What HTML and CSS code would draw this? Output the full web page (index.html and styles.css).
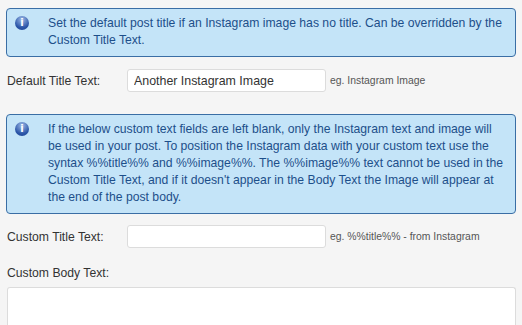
FILE: index.html
```html
<!DOCTYPE html>
<html lang="en">
<head>
    <meta charset="UTF-8">
    <title>Instagram Post Settings</title>
    <link rel="stylesheet" href="styles.css">
</head>
<body>
    <div class="notice">
        <span class="info-icon">i</span>
        <p>Set the default post title if an Instagram image has no title. Can be overridden by the Custom Title Text.</p>
    </div>
    <div class="field">
        <label class="label">Default Title Text:</label>
        <input class="text" type="text" value="Another Instagram Image">
        <span class="hint">eg. Instagram Image</span>
    </div>
    <div class="notice notice-tall">
        <span class="info-icon">i</span>
        <p>If the below custom text fields are left blank, only the Instagram text and image will be used in your post. To position the Instagram data with your custom text use the syntax %%title%% and %%image%%. The %%image%% text cannot be used in the Custom Title Text, and if it doesn't appear in the Body Text the Image will appear at the end of the post body.</p>
    </div>
    <div class="field field-after">
        <label class="label">Custom Title Text:</label>
        <input class="text" type="text" value="">
        <span class="hint">eg. %%title%% - from Instagram</span>
    </div>
    <div class="field-block">
        <label class="label">Custom Body Text:</label>
        <textarea class="body-text"></textarea>
    </div>
</body>
</html>
```

FILE: styles.css
```css
body {
    margin: 0;
    padding: 8px 6px 0 6px;
    background-color: #f5f5f5;
    font-family: "Liberation Sans", Arial, sans-serif;
    font-size: 12.2px;
    color: #333;
    overflow: hidden;
}
.notice {
    display: flex;
    align-items: flex-start;
    background-color: #c4e4f8;
    border: 1px solid #3a6ea5;
    border-radius: 4px;
    padding: 6px 8px 7px 8px;
    color: #1d4f8a;
}
.notice p {
    margin: 0;
    line-height: 17px;
}
.info-icon {
    flex: none;
    width: 14px;
    height: 14px;
    margin: 1px 19px 0 0;
    border-radius: 50%;
    background: radial-gradient(circle at 50% 25%, #9bb8e6, #2b55a8 65%, #1f4593);
    color: #fff;
    font-family: "DejaVu Sans", sans-serif;
    font-weight: bold;
    font-size: 10px;
    line-height: 14px;
    text-align: center;
}
.field {
    display: flex;
    align-items: center;
    margin: 12px 0 0 1px;
}
.field-after {
    margin-top: 11px;
}
.notice-tall {
    margin-top: 22px;
}
.label {
    width: 120px;
    flex: none;
}
.text {
    box-sizing: border-box;
    width: 199px;
    height: 23px;
    margin: 0;
    padding: 2px 6px;
    background: #fff;
    border: 1px solid #dcdcdc;
    border-radius: 3px;
    font-family: inherit;
    font-size: 12.4px;
    color: #333;
}
.hint {
    margin-left: 4px;
    font-size: 10.4px;
    color: #555;
}
.field-block {
    margin: 18px 0 0 1px;
}
.field-block .label {
    display: block;
    width: auto;
    margin-bottom: 7px;
}
.body-text {
    display: block;
    box-sizing: border-box;
    width: 509px;
    height: 40px;
    margin: 0;
    background: #fff;
    border: 1px solid #dcdcdc;
    border-bottom: none;
    border-radius: 3px 3px 0 0;
    resize: none;
}
```
